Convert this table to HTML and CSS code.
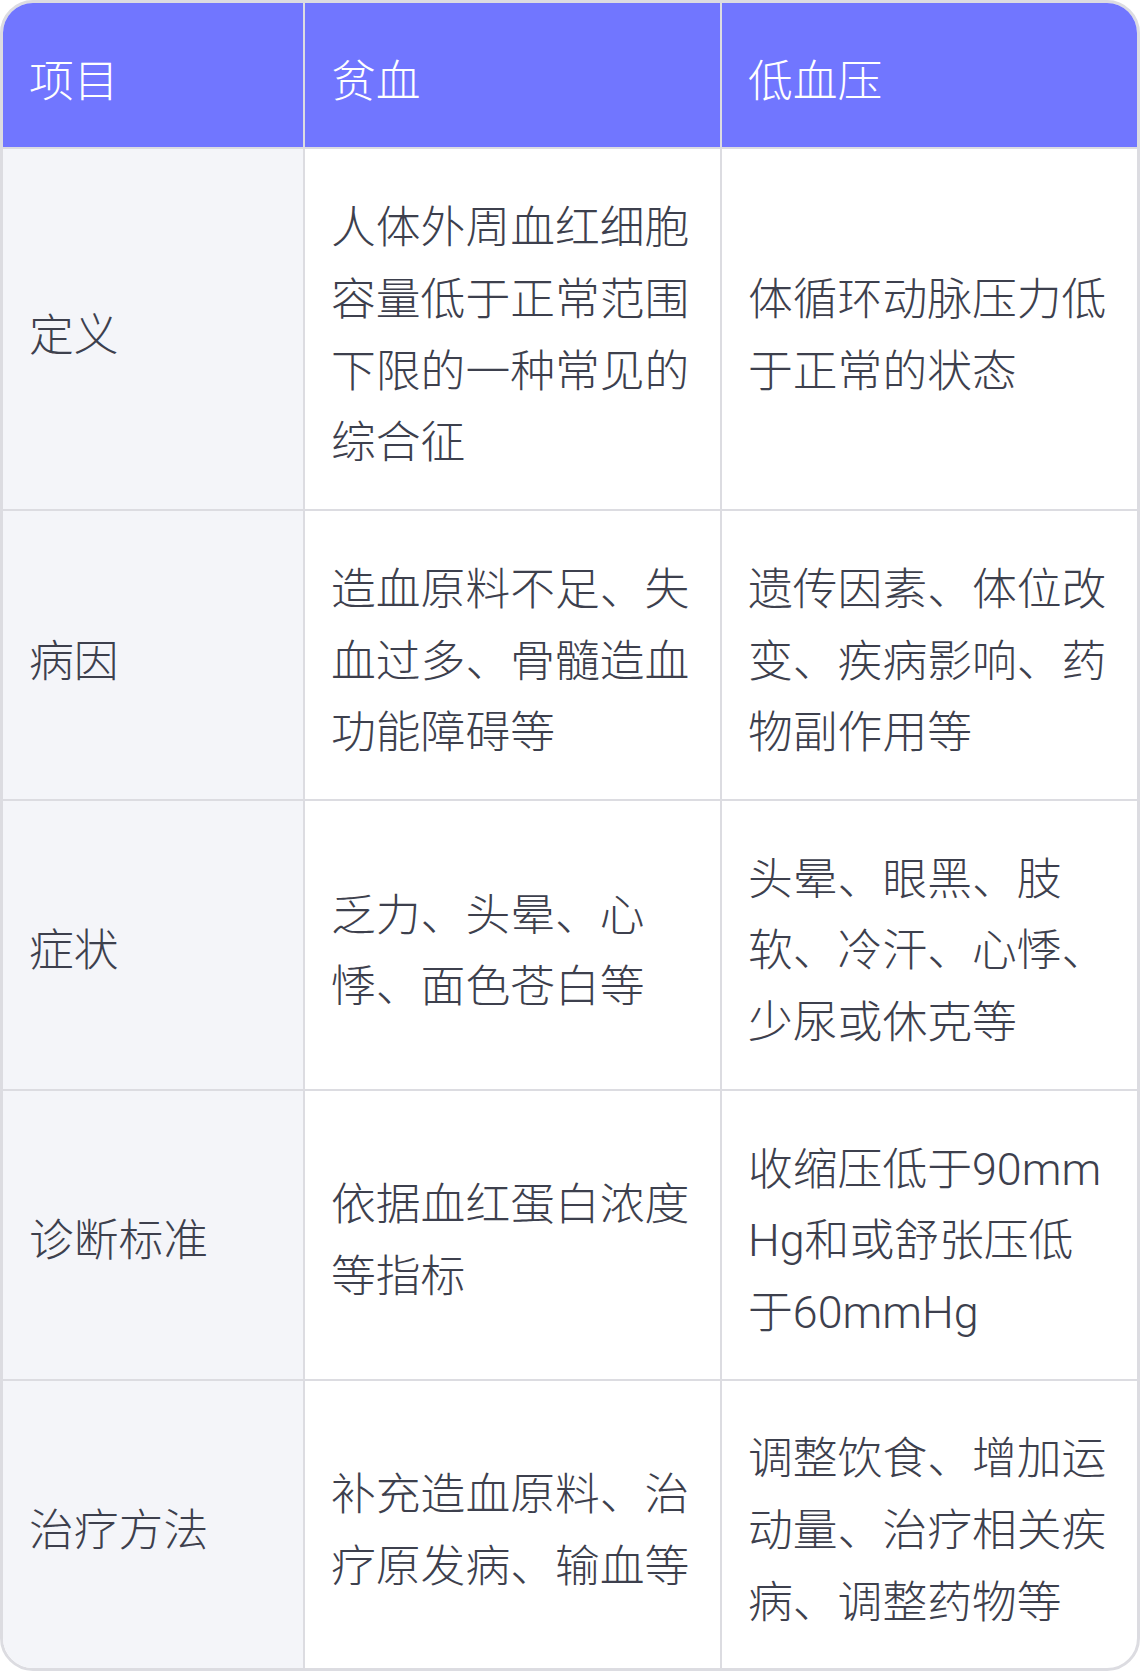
FILE: index.html
```html
<!DOCTYPE html>
<html lang="zh-CN">
<head>
<meta charset="utf-8">
<title>贫血与低血压对比</title>
<link rel="stylesheet" href="styles.css">
</head>
<body>
<div class="table-wrap">
  <table class="compare">
    <colgroup>
      <col class="c1">
      <col class="c2">
      <col class="c3">
    </colgroup>
    <thead>
      <tr>
        <th>项目</th>
        <th>贫血</th>
        <th>低血压</th>
      </tr>
    </thead>
    <tbody>
      <tr>
        <td class="label">定义</td>
        <td>人体外周血红细胞容量低于正常范围下限的一种常见的综合征</td>
        <td>体循环动脉压力低于正常的状态</td>
      </tr>
      <tr>
        <td class="label">病因</td>
        <td>造血原料不足、失血过多、骨髓造血功能障碍等</td>
        <td>遗传因素、体位改变、疾病影响、药物副作用等</td>
      </tr>
      <tr>
        <td class="label">症状</td>
        <td>乏力、头晕、心悸、面色苍白等</td>
        <td>头晕、眼黑、肢软、冷汗、心悸、少尿或休克等</td>
      </tr>
      <tr>
        <td class="label">诊断标准</td>
        <td>依据血红蛋白浓度等指标</td>
        <td>收缩压低于90mmHg和或舒张压低于60mmHg</td>
      </tr>
      <tr>
        <td class="label">治疗方法</td>
        <td>补充造血原料、治疗原发病、输血等</td>
        <td>调整饮食、增加运动量、治疗相关疾病、调整药物等</td>
      </tr>
    </tbody>
  </table>
</div>
</body>
</html>
```

FILE: styles.css
```css
* {
  box-sizing: border-box;
}

html, body {
  margin: 0;
  padding: 0;
  background: #ffffff;
}

body {
  font-family: "Roboto", "Noto Sans CJK SC", sans-serif;
  font-weight: 300;
}

.table-wrap {
  width: 1140px;
  border: 3px solid #dcdce1;
  border-radius: 33px;
  overflow: hidden;
  background: #ffffff;
}

.compare {
  width: 100%;
  table-layout: fixed;
  border-collapse: separate;
  border-spacing: 0;
  font-size: 44.8px;
  line-height: 71.68px;
  color: #3d404d;
}

.c1 { width: 300px; }
.c2 { width: 417px; }
.c3 { width: 417px; }

.compare th,
.compare td {
  padding: 42.8px 28px 30px 26px;
  text-align: left;
  vertical-align: middle;
  word-break: break-all;
}

.compare th {
  background: #7176ff;
  color: #ffffff;
  font-weight: 300;
}

.compare th + th,
.compare td + td {
  border-left: 2px solid #dcdce1;
}

.compare tbody td {
  border-top: 2px solid #dcdce1;
}

.compare td.label {
  background: #f4f5f9;
}
```
